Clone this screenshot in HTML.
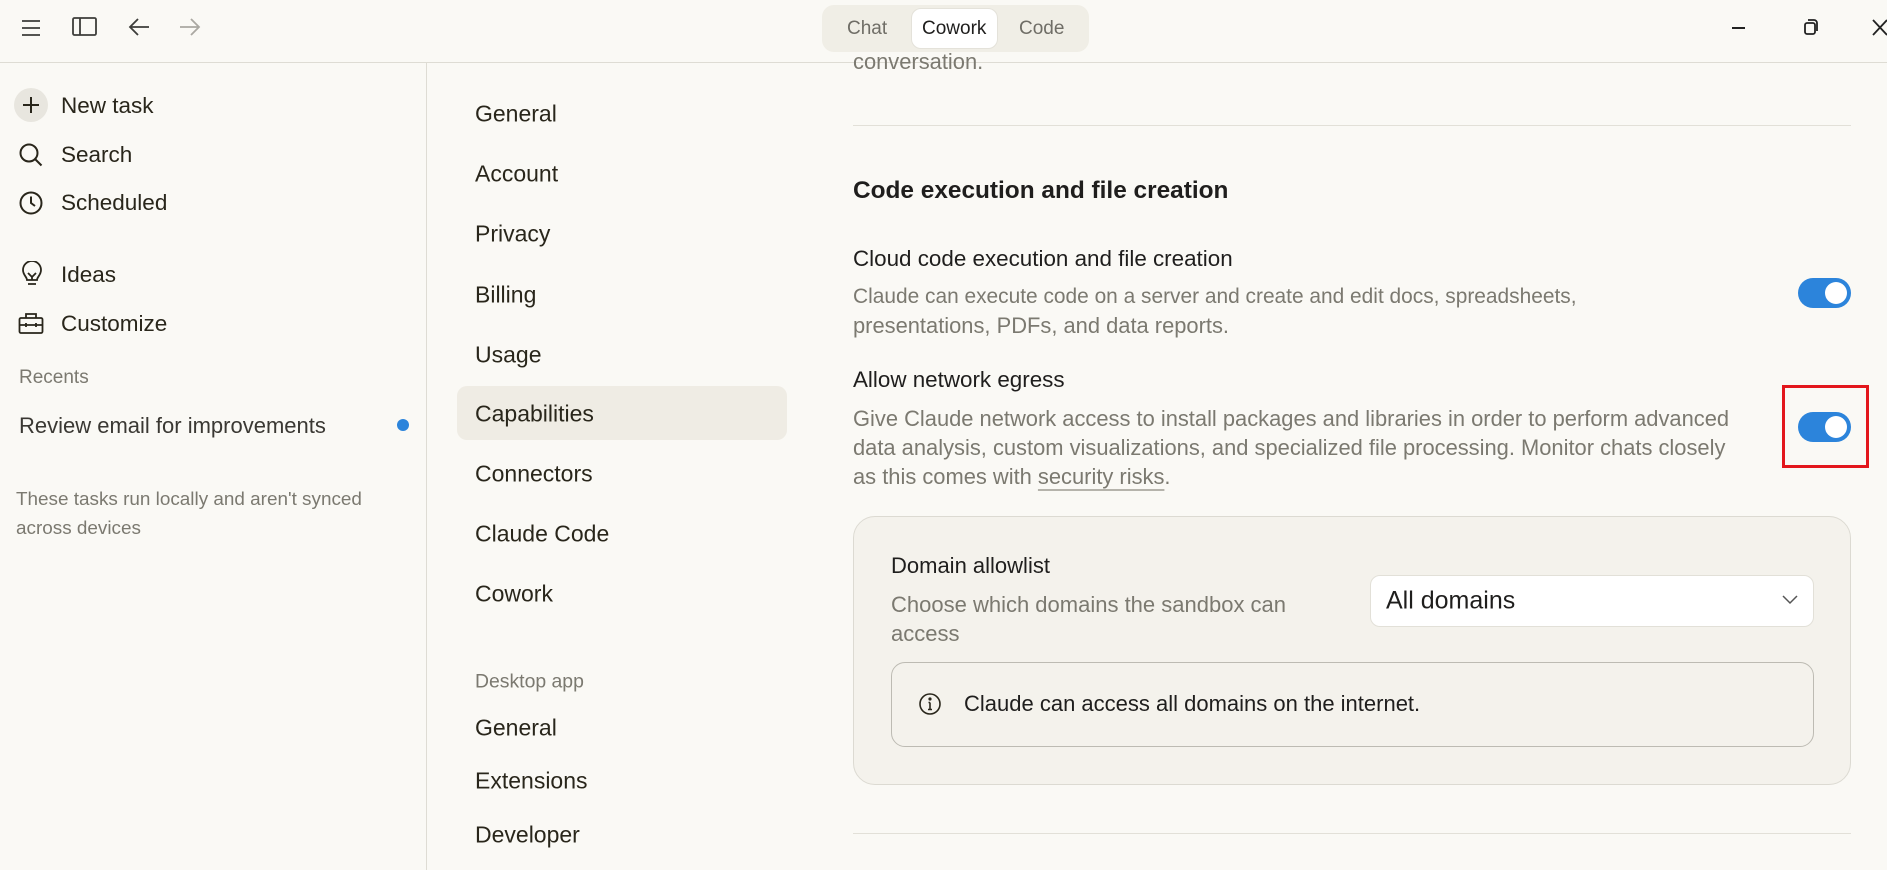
<!DOCTYPE html>
<html><head><meta charset="utf-8"><style>
*{box-sizing:border-box;margin:0;padding:0}
body{width:1887px;height:870px;overflow:hidden;background:#faf9f5;font-family:"Liberation Sans",sans-serif;color:#1f1e1d;position:relative}
.a{position:absolute;white-space:nowrap}
.top{position:absolute;left:0;top:0;width:1887px;height:63px;border-bottom:1px solid #dedcd4}
.side{position:absolute;left:0;top:63px;width:427px;height:807px;border-right:1px solid #dedcd4}
.si{font-size:22.5px;color:#29261b;transform:translateY(-50%)}
.nav{font-size:23px;color:#29261b;left:475px;transform:translateY(-50%)}
.ct{left:853px;font-size:21.9px;transform:translateY(-50%)}
.g{color:#7b7970}
.tog{position:absolute;width:53px;height:30px;border-radius:15px;background:#2c84db}
.tog:after{content:"";position:absolute;right:4px;top:4px;width:22px;height:22px;border-radius:50%;background:#fff}
svg{position:absolute}
</style></head><body>
<div class="top"></div>
<svg style="left:20px;top:18px" width="24" height="20" viewBox="0 0 24 20" fill="none" stroke="#3d3d3a" stroke-width="1.8"><path d="M2 3h18M2 10h18M2 17h18"/></svg>
<svg style="left:72px;top:16px" width="26" height="22" viewBox="0 0 26 22" fill="none" stroke="#3d3d3a" stroke-width="1.8"><rect x="1" y="2" width="23" height="17" rx="1.5"/><path d="M8 2v17"/></svg>
<svg style="left:127px;top:16px" width="24" height="22" viewBox="0 0 24 22" fill="none" stroke="#3d3d3a" stroke-width="1.8"><path d="M22 11H3M11 3l-8 8 8 8"/></svg>
<svg style="left:178px;top:16px" width="24" height="22" viewBox="0 0 24 22" fill="none" stroke="#aaa8a2" stroke-width="1.8"><path d="M2 11h19M13 3l8 8-8 8"/></svg>
<div class="a" style="left:822px;top:5px;width:267px;height:47px;border-radius:12px;background:#f0eee6"></div>
<div class="a" style="left:911px;top:8px;width:87px;height:41px;border-radius:10px;background:#fff;border:1px solid #e4e2da"></div>
<div class="a" style="left:847px;top:18px;font-size:19px;color:#6f6d66">Chat</div>
<div class="a" style="left:922px;top:18px;font-size:19px;color:#1f1e1d">Cowork</div>
<div class="a" style="left:1019px;top:18px;font-size:19px;color:#6f6d66">Code</div>
<svg style="left:1731px;top:20px" width="16" height="16"><path d="M1 8h13" stroke="#222" stroke-width="2"/></svg>
<svg style="left:1803px;top:18px" width="16" height="18" viewBox="0 0 16 18" fill="none" stroke="#222" stroke-width="1.8"><rect x="2" y="5" width="10" height="11" rx="2"/><path d="M5 2h6a3 3 0 0 1 3 3v8"/></svg>
<svg style="left:1872px;top:19px" width="15" height="18"><path d="M1 1l14 15M15 1L1 16" stroke="#222" stroke-width="1.8"/></svg>
<div class="side"></div>
<div class="a" style="left:14px;top:88px;width:34px;height:34px;border-radius:50%;background:#e8e6df"></div>
<svg style="left:21px;top:95px" width="20" height="20"><path d="M10 2v16M2 10h16" stroke="#29261b" stroke-width="2"/></svg>
<svg style="left:18px;top:142px" width="26" height="26" viewBox="0 0 26 26" fill="none" stroke="#29261b" stroke-width="2"><circle cx="11" cy="11" r="8.5"/><path d="M17 17l6.5 6.5"/></svg>
<svg style="left:18px;top:190px" width="26" height="26" viewBox="0 0 26 26" fill="none" stroke="#29261b" stroke-width="2"><circle cx="13" cy="13" r="10.5"/><path d="M13 6.5V13l4 3"/></svg>
<svg style="left:20px;top:261px" width="24" height="28" viewBox="0 0 24 28" fill="none" stroke="#29261b" stroke-width="1.8"><path d="M7 19c0-3-4-5-4-10a9 9 0 0 1 18 0c0 5-4 7-4 10zM8 23h8M8 12l4 4 4-4M12 16v3"/></svg>
<svg style="left:18px;top:311px" width="26" height="24" viewBox="0 0 26 24" fill="none" stroke="#29261b" stroke-width="1.8"><rect x="1.5" y="7" width="23" height="15" rx="1.5"/><path d="M8 7V3h10v4M1.5 14h23M8 12v4M18 12v4"/></svg>
<div class="a si" style="left:61px;top:106px">New task</div>
<div class="a si" style="left:61px;top:155px">Search</div>
<div class="a si" style="left:61px;top:203px">Scheduled</div>
<div class="a si" style="left:61px;top:275px">Ideas</div>
<div class="a si" style="left:61px;top:324px">Customize</div>
<div class="a si g" style="left:19px;top:378px;font-size:19px">Recents</div>
<div class="a si" style="left:19px;top:426px;font-size:22px;color:#3a3833">Review email for improvements</div>
<div class="a" style="left:397px;top:419px;width:12px;height:12px;border-radius:50%;background:#2c84db"></div>
<div class="a si g" style="left:16px;top:500px;font-size:18.9px">These tasks run locally and aren't synced</div>
<div class="a si g" style="left:16px;top:529px;font-size:18.9px">across devices</div>
<div class="a" style="left:457px;top:386px;width:330px;height:54px;border-radius:10px;background:#efece4"></div>
<div class="a nav" style="top:114px">General</div>
<div class="a nav" style="top:174px">Account</div>
<div class="a nav" style="top:234px">Privacy</div>
<div class="a nav" style="top:295px">Billing</div>
<div class="a nav" style="top:355px">Usage</div>
<div class="a nav" style="top:414px">Capabilities</div>
<div class="a nav" style="top:474px">Connectors</div>
<div class="a nav" style="top:534px">Claude Code</div>
<div class="a nav" style="top:594px">Cowork</div>
<div class="a nav g" style="top:682px;font-size:19.4px">Desktop app</div>
<div class="a nav" style="top:728px">General</div>
<div class="a nav" style="top:781px">Extensions</div>
<div class="a nav" style="top:835px">Developer</div>
<div class="a ct g" style="top:62px">conversation.</div>
<div class="a" style="left:853px;top:125px;width:998px;height:1px;background:#e2e0d8"></div>
<div class="a ct" style="top:191px;font-size:24.4px;font-weight:bold">Code execution and file creation</div>
<div class="a ct" style="top:259px;font-size:22.4px">Cloud code execution and file creation</div>
<div class="a ct g" style="top:297px;font-size:20.9px">Claude can execute code on a server and create and edit docs, spreadsheets,</div>
<div class="a ct g" style="top:326px">presentations, PDFs, and data reports.</div>
<div class="tog" style="left:1798px;top:278px"></div>
<div class="a ct" style="top:380px;font-size:22.4px">Allow network egress</div>
<div class="a ct g" style="top:419px">Give Claude network access to install packages and libraries in order to perform advanced</div>
<div class="a ct g" style="top:448px">data analysis, custom visualizations, and specialized file processing. Monitor chats closely</div>
<div class="a ct g" style="top:477px">as this comes with <span style="text-decoration:underline;text-decoration-color:#b5b3ab;text-underline-offset:5px">security risks</span>.</div>
<div class="tog" style="left:1798px;top:412px"></div>
<div class="a" style="left:1782px;top:385px;width:87px;height:83px;border:3px solid #e3161c"></div>
<div class="a" style="left:853px;top:516px;width:998px;height:269px;border-radius:22px;background:#f4f2ec;border:1px solid #dcdad2"></div>
<div class="a ct" style="left:891px;top:566px;font-size:22px">Domain allowlist</div>
<div class="a ct g" style="left:891px;top:605px;font-size:22px">Choose which domains the sandbox can</div>
<div class="a ct g" style="left:891px;top:634px;font-size:22px">access</div>
<div class="a" style="left:1370px;top:575px;width:444px;height:52px;border-radius:10px;background:#fff;border:1px solid #e2e0d8"></div>
<div class="a ct" style="left:1386px;top:601px;font-size:25px">All domains</div>
<svg style="left:1781px;top:594px" width="18" height="12"><path d="M2 2l7 7 7-7" fill="none" stroke="#555" stroke-width="1.5"/></svg>
<div class="a" style="left:891px;top:662px;width:923px;height:85px;border-radius:14px;border:1px solid #bdbbb3"></div>
<svg style="left:918px;top:692px" width="24" height="24" viewBox="0 0 24 24" fill="none" stroke="#29261b" stroke-width="1.6"><circle cx="12" cy="12" r="10"/><path d="M12 10.5v7M10 17.5h4M10.5 10.5H12"/><circle cx="12" cy="7" r=".8" fill="#29261b"/></svg>
<div class="a ct" style="left:964px;top:704px;font-size:22px">Claude can access all domains on the internet.</div>
<div class="a" style="left:853px;top:833px;width:998px;height:1px;background:#e2e0d8"></div>
</body></html>
